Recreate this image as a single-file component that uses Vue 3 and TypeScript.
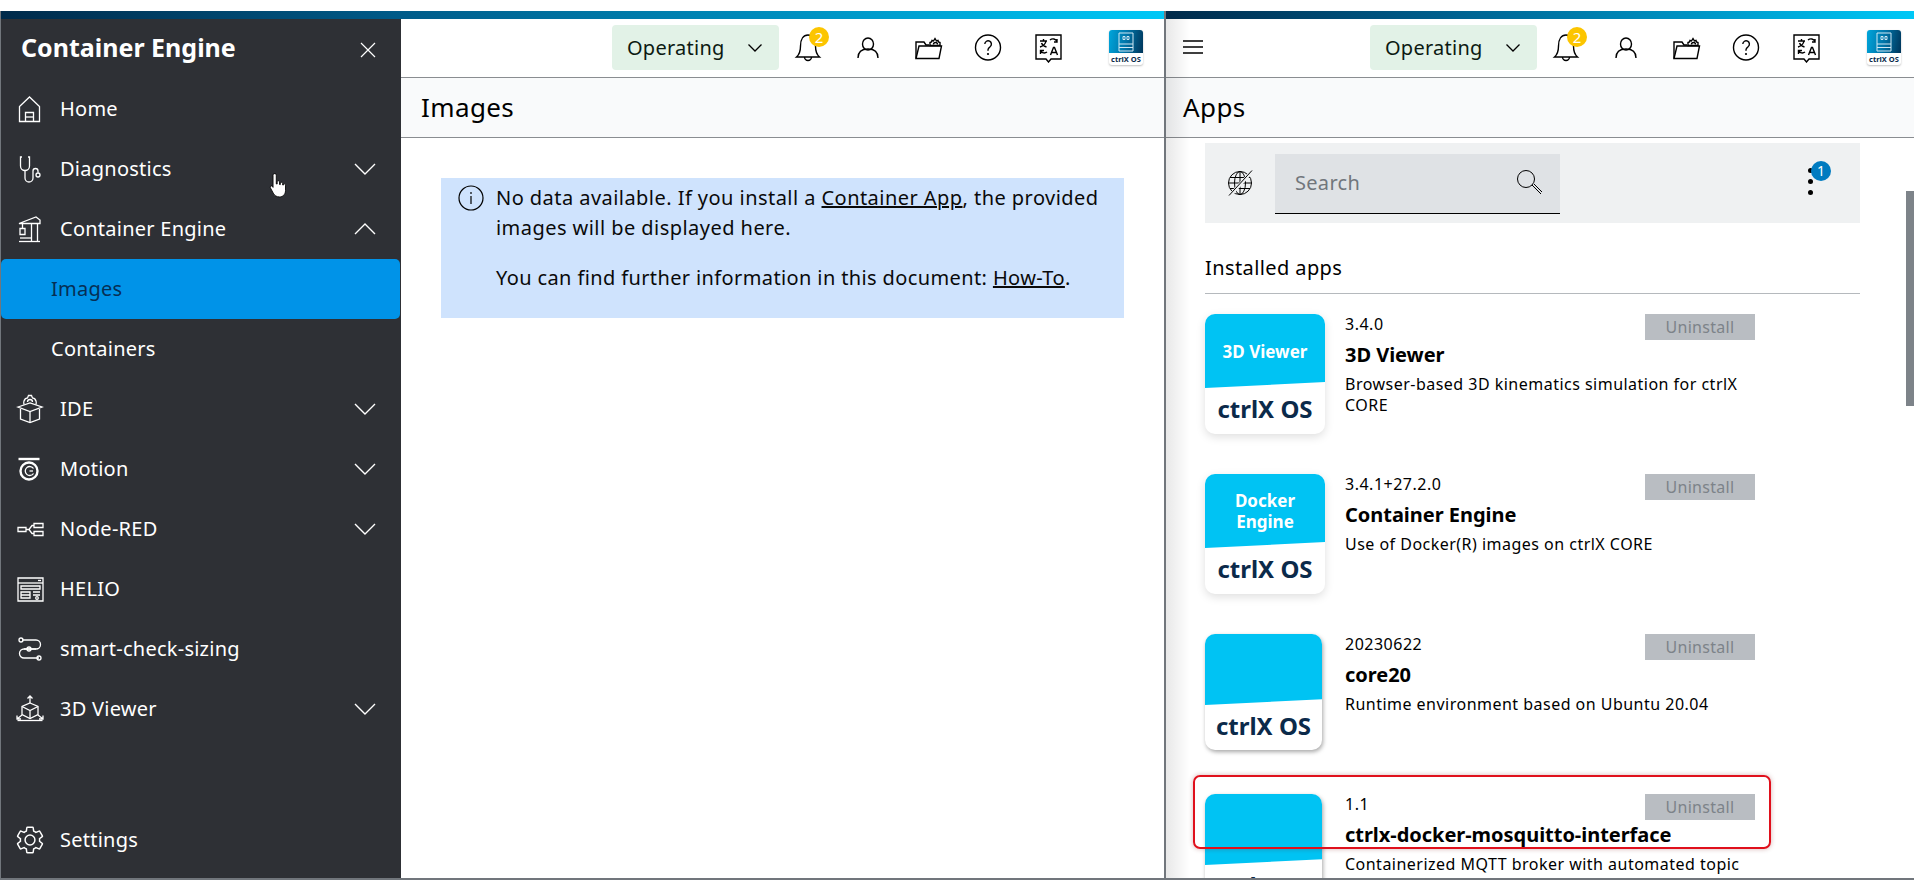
<script setup lang="ts">
interface NavItem {
  label: string
  box: string
  d: string[]
  dots?: number[][]
  chevron?: 'up' | 'down'
  sub?: boolean
  active?: boolean
}

const nav: NavItem[] = [
  { label: 'Home', box: '0 0 32 32', d: ['M5.500 28.500V13.500L15.500 4l10 9.500v15z', 'M11.500 28.500v-9h8v9', 'M11.500 24h8'] },
  { label: 'Diagnostics', box: '0 0 32 32', chevron: 'down', d: ['M8 4H6.500v9a4.500 4.500 0 0 0 9 0V4H14', 'M11 17.500V25a4 4 0 0 0 8 0v-7a2.500 2.500 0 0 1 5 0v1.500'], dots: [[24, 22, 2]] },
  { label: 'Container Engine', box: '0 0 32 32', chevron: 'up', d: ['M5 28.500h21', 'M5 10.500L22 4l4 3v3.500H5z', 'M17.500 10.500v18M23.500 10.500v18', 'M6 15.500h5v6H6z', 'M8.500 10.500v5', 'M6 25h11.500'] },
  { label: 'Images', box: '0 0 32 32', sub: true, active: true, d: [] },
  { label: 'Containers', box: '0 0 32 32', sub: true, d: [] },
  { label: 'IDE', box: '0 0 32 32', chevron: 'down', d: ['M4 14l12-4 12 4-12 4.500z', 'M6.500 16v10l9.500 3.500 9.500-3.500V16', 'M16 18.500v11', 'M10 11.500a6.500 6.500 0 0 1 1.500-6l2-.5 1-2.500h3l1 2.500 2 .5a6.500 6.500 0 0 1 1.500 6', 'M13.500 9a2.500 2.500 0 0 1 5 0'] },
  { label: 'Motion', box: '0 0 32 32', chevron: 'down', d: ['M19.500 15.500a4.500 4.500 0 1 0 0 5', 'M15.500 18h3.500'], dots: [] },
  { label: 'Node-RED', box: '0 0 32 32', chevron: 'down', d: ['M4 14.500h8v4H4z', 'M12 16.500h3l3-4h2M15 16.500l3 4h2', 'M20 10.500h9v4h-9zM20 18.500h9v4h-9z'] },
  { label: 'HELIO', box: '0 0 32 32', d: ['M4 5h25v23H4z', 'M4 10h25', 'M7 13h19v3H7z', 'M7 19h9v6H7zM7 22h9', 'M19 19h7M19 22h7', 'M24 7.500h3'], dots: [[23, 25, 1.300]] },
  { label: 'smart-check-sizing', box: '0 0 32 32', d: ['M8 7h14a4 4 0 0 1 0 9H10a4 4 0 0 0 0 9h15', 'M10 16h12'], dots: [[7, 7, 2], [25, 25, 2], [15, 16, 2]] },
  { label: '3D Viewer', box: '0 0 32 32', chevron: 'down', d: ['M16 10l8 3.500v8l-8 4-8-4v-8z', 'M8 13.500l8 4 8-4M16 17.500v8', 'M16 10V3M13.500 5.500L16 3l2.500 2.500', 'M8 22l-5 4M3 22.500V26h4', 'M24 22l5 4M29 22.500V26h-4', 'M3.500 27.500h25'] }
]

const cog = 'M19.140 12.940c.04-.3.06-.61.06-.94 0-.32-.02-.64-.07-.94l2.030-1.580c.18-.14.23-.41.12-.61l-1.920-3.320c-.12-.22-.37-.29-.59-.22l-2.390.96c-.5-.38-1.030-.7-1.620-.94l-.36-2.540c-.04-.24-.24-.41-.48-.41h-3.840c-.24 0-.43.17-.47.41l-.36 2.540c-.59.24-1.130.57-1.620.94l-2.390-.96c-.22-.08-.47 0-.59.22L2.740 8.870c-.12.21-.08.47.12.61l2.030 1.580c-.05.3-.09.63-.09.94s.02.64.07.94l-2.030 1.580c-.18.14-.23.41-.12.61l1.920 3.320c.12.22.37.29.59.22l2.390-.96c.5.38 1.030.7 1.620.94l.36 2.540c.05.24.24.41.48.41h3.840c.24 0 .44-.17.47-.41l.36-2.540c.59-.24 1.130-.56 1.620-.94l2.390.96c.22.08.47 0 .59-.22l1.920-3.320c.12-.22.07-.47-.12-.61l-2.010-1.580z'

interface Tool { name: string; d: string[]; dots?: number[][] }
const tools: Tool[] = [
  { name: 'bell', d: ['M4.500 26c3-2.500 4-5 4-11 0-7 3-11 7.500-11s7.500 4 7.500 11c0 6 1 8.500 4 11z', 'M12.500 26a3.500 3.500 0 0 0 7 0'] },
  { name: 'user', d: ['M10.500 13a5.500 6 0 1 0 11 0a5.500 6 0 1 0-11 0', 'M6 27c0-6 4-9 10-9s10 3 10 9'] },
  { name: 'folder', d: ['M4 27.500V11h8l2 3h3', 'M4 27.500l3-12.500h22.500L27 27.500z', 'M18 11.500l1.500-.5.500-1.500 1.500.5 1.500-2.500 1.500 2.500 1.500-.5.5 1.500 1.500.5v3h-10z', 'M21.500 13.500a2 2 0 0 1 4 0'] },
  { name: 'help', d: ['M3.500 16.500a12.500 12.500 0 1 0 25 0a12.500 12.500 0 1 0-25 0', 'M12.800 13a3.300 3.300 0 1 1 5.200 2.800c-1.200.8-2 1.500-2 3v1'], dots: [[16, 23, 1.100]] },
  { name: 'translate', d: ['M4 4h25v24H19l-2.500 3-2.500-3H4z', 'M8 10h7M11.500 8v2M14 10c-.5 3-2.500 5-6 6M9.500 12c.8 2 2.500 3.300 5 4', 'M18 9a4.500 4.500 0 0 1 7 1.500M25 8v3h-3', 'M15 21a4.500 4.500 0 0 1-6.500-1M8.500 23v-3.500H12', 'M18.500 24l3-7.500h1l3 7.500M19.800 21.500h4.500'] }
]

const apps = [
  { version: '3.4.0', name: '3D Viewer', desc: 'Browser-based 3D kinematics simulation for ctrlX CORE', lines: ['3D Viewer'], wide: true },
  { version: '3.4.1+27.2.0', name: 'Container Engine', desc: 'Use of Docker(R) images on ctrlX CORE', lines: ['Docker', 'Engine'], wide: true },
  { version: '20230622', name: 'core20', desc: 'Runtime environment based on Ubuntu 20.04', lines: [], wide: false },
  { version: '1.1', name: 'ctrlx-docker-mosquitto-interface', desc: 'Containerized MQTT broker with automated topic', lines: [], wide: false }
]
</script>

<template>
  <div class="screen">
    <div class="topstrip"></div>
    <div class="panes">
      <section class="pane left">
        <div class="brandbar"></div>
        <div class="left-body">
          <aside class="sidebar">
            <div class="side-title">
              <span>Container Engine</span>
              <svg class="close" viewBox="0 0 16 16"><path d="M1 1l14 14M15 1L1 15" /></svg>
            </div>
            <nav class="nav">
              <div v-for="item in nav" :key="item.label" class="nav-row" :class="{ sub: item.sub, active: item.active }">
                <svg v-if="!item.sub" class="nav-icon" :viewBox="item.box">
                  <path v-for="p in item.d" :key="p" :d="p" />
                  <circle v-for="c in item.dots" :key="c[0]" :cx="c[0]" :cy="c[1]" :r="c[2]" />
                  <template v-if="item.label === 'Motion'">
                    <path class="thick" d="M4.500 6h21" />
                    <circle class="thick" cx="15" cy="18" r="8.500" />
                  </template>
                </svg>
                <span class="nav-label">{{ item.label }}</span>
                <svg v-if="item.chevron" class="chev" :class="{ up: item.chevron === 'up' }" viewBox="0 0 22 12"><path d="M1 1l10 10L21 1" /></svg>
              </div>
            </nav>
            <div class="nav-row settings">
              <svg class="nav-icon" viewBox="0 0 24 24"><path :d="cog" stroke-width="1.100" /><circle cx="12" cy="12" r="3.700" stroke-width="1.100" /></svg>
              <span class="nav-label">Settings</span>
            </div>
          </aside>
          <main class="main">
            <header class="head">
              <div class="chip"><span>Operating</span><svg viewBox="0 0 16 10"><path d="M1.500 1.500L8 8l6.500-6.500" /></svg></div>
              <div class="tools">
                <div v-for="t in tools" :key="t.name" class="tool">
                  <svg viewBox="0 0 32 32"><path v-for="p in t.d" :key="p" :d="p" /><circle v-for="c in t.dots" :key="c[0]" class="fill" :cx="c[0]" :cy="c[1]" :r="c[2]" /></svg>
                  <b v-if="t.name === 'bell'" class="bell-badge">2</b>
                </div>
              </div>
              <div class="logo"><div class="logo-top"><svg viewBox="0 0 20 20"><path d="M3 1h14v18H3zM3 12h14M3 15.500h14M7 4.500h2v3H7zM11 4.500h2v3h-2z" /></svg></div><span>ctrlX OS</span></div>
            </header>
            <div class="titlebar">Images</div>
            <div class="notice">
              <svg class="info" viewBox="0 0 26 26"><circle cx="13" cy="13" r="12" /><path d="M13 11v8M13 7v2" /></svg>
              <div class="notice-text">
                <p>No data available. If you install a <a>Container App</a>, the provided images will be displayed here.</p>
                <p class="doc">You can find further information in this document: <a>How-To</a>.</p>
              </div>
            </div>
          </main>
        </div>
      </section>

      <section class="pane right">
        <div class="brandbar"></div>
        <header class="head head-right">
          <svg class="burger" viewBox="0 0 20 14"><path d="M0 1h20M0 7h20M0 13h20" /></svg>
          <div class="chip"><span>Operating</span><svg viewBox="0 0 16 10"><path d="M1.500 1.500L8 8l6.500-6.500" /></svg></div>
          <div class="tools">
            <div v-for="t in tools" :key="t.name" class="tool">
              <svg viewBox="0 0 32 32"><path v-for="p in t.d" :key="p" :d="p" /><circle v-for="c in t.dots" :key="c[0]" class="fill" :cx="c[0]" :cy="c[1]" :r="c[2]" /></svg>
              <b v-if="t.name === 'bell'" class="bell-badge">2</b>
            </div>
          </div>
          <div class="logo"><div class="logo-top"><svg viewBox="0 0 20 20"><path d="M3 1h14v18H3zM3 12h14M3 15.500h14M7 4.500h2v3H7zM11 4.500h2v3h-2z" /></svg></div><span>ctrlX OS</span></div>
        </header>
        <div class="titlebar titlebar-right">Apps</div>
        <div class="content">
          <div class="toolbar">
            <svg class="globe" viewBox="0 0 26 26"><circle cx="13" cy="13" r="11.500" /><ellipse cx="13" cy="13" rx="5.500" ry="11.500" /><path d="M13 1.500v23M1.500 13h23M3 7.500h20M3 18.500h20" /><path class="slash-gap" d="M25 1.500L3 25.500" /><path d="M25 .5L2 25.500" /></svg>
            <div class="search">
              <span>Search</span>
              <svg viewBox="0 0 28 26"><circle cx="10" cy="10" r="8.500" /><path d="M16 16l9 9M18 15l8 8" /></svg>
            </div>
            <div class="kebab"><i></i><i></i><i></i><b>1</b></div>
          </div>
          <h2 class="section">Installed apps</h2>
          <div v-for="(app, i) in apps" :key="app.name" class="app">
            <div class="tile" :class="{ narrow: !app.wide }">
              <div class="tile-top"><span v-for="l in app.lines" :key="l">{{ l }}</span></div>
              <div class="tile-bottom">ctrlX OS</div>
            </div>
            <div class="app-text">
              <div class="ver">{{ app.version }}</div>
              <div class="app-name">{{ app.name }}</div>
              <div class="desc">{{ app.desc }}</div>
            </div>
            <button class="uninstall" :data-row="i">Uninstall</button>
          </div>
        </div>
        <div class="side-shade"></div>
        <div class="scrollbar"></div>
      </section>
    </div>
    <div class="bottomline"></div>
    <div class="annotation"></div>
    <svg class="cursor" viewBox="0 0 18 24">
      <path d="M5 1.500c1 0 1.500.7 1.500 1.500v8l.8.1V8.500c1.200-.8 2-.3 2.200.5v2.500l.7.1V9.800c1.200-.6 2-.2 2.200.7V12l.6.1v-1c1-.4 2 0 2 1.100v5c0 3.500-2.500 5.800-5.500 5.800-2.800 0-4.500-1.200-5.800-3.500L1 14.500c-.5-1 .8-2.300 2-1.300l.5 1V3c0-.8.5-1.500 1.500-1.500z" />
    </svg>
  </div>
</template>

<style>
html, body { margin: 0; background: #fff; overflow: hidden; }
</style>

<style scoped>
.screen { position: relative; width: 1914px; height: 880px; overflow: hidden; background: #fff; font-family: "Noto Sans", sans-serif; color: #000; display: flex; flex-direction: column; }
.topstrip { height: 11px; flex: none; }
.panes { flex: 1; display: flex; min-height: 0; }
.bottomline { height: 2px; flex: none; background: #71767c; }
.pane { display: flex; flex-direction: column; min-width: 0; position: relative; }
.left { width: 1166px; flex: none; box-sizing: border-box; border-left: 1px solid #71767c; border-right: 2px solid #71767c; }
.right { flex: 1; overflow: hidden; }
.brandbar { height: 8px; flex: none; background: linear-gradient(90deg, #002a4a 0%, #005c8a 35%, #0090c0 68%, #00c8f7 100%); }
.left-body { flex: 1; display: flex; min-height: 0; }

.sidebar { width: 400px; flex: none; background: #2e3035; color: #fff; display: flex; flex-direction: column; }
.side-title { height: 60px; box-sizing: border-box; display: flex; align-items: center; justify-content: space-between; padding: 0 25px 4px 20px; font-size: 25px; font-weight: 700; }
.close { width: 16px; height: 16px; margin-top: 6px; fill: none; stroke: #fff; stroke-width: 1.200; }
.nav { flex: 1; }
.nav-row { height: 60px; box-sizing: border-box; display: flex; align-items: center; padding-left: 13px; padding-bottom: 2px; font-size: 20px; letter-spacing: .25px; }
.nav-row.sub { padding-left: 50px; }
.nav-row.active { background: #0093e8; color: #062f55; border-radius: 5px; margin-right: 1px; }
.nav-icon { width: 32px; height: 32px; flex: none; margin-right: 14px; margin-top: 2px; fill: none; stroke: #fff; stroke-width: 1.300; }
.nav-icon circle { fill: none; }
.nav-icon .thick { stroke-width: 2.400; }
.nav-label { flex: 1; }
.chev { width: 22px; height: 12px; margin-right: 25px; margin-top: 2px; fill: none; stroke: #fff; stroke-width: 1.400; }
.chev.up { transform: scaleY(-1); }
.settings { margin-bottom: 8px; }

.main { flex: 1; min-width: 0; display: flex; flex-direction: column; }
.head { height: 59px; flex: none; box-sizing: border-box; border-bottom: 1px solid #8a8d91; display: flex; align-items: flex-start; justify-content: flex-end; padding-top: 6px; padding-right: 21px; position: relative; }
.chip { width: 167px; height: 45px; box-sizing: border-box; background: #e2f2e7; border-radius: 4px; display: flex; align-items: center; justify-content: space-between; padding: 0 16px 0 15px; font-size: 20px; letter-spacing: .25px; color: #0c1a12; }
.chip svg { width: 16px; height: 10px; fill: none; stroke: #000; stroke-width: 1.300; }
.tools { display: flex; margin-left: -1px; margin-right: 31px; }
.tool { width: 60px; height: 32px; position: relative; margin-top: 6px; display: flex; justify-content: center; }
.tool svg { width: 32px; height: 32px; fill: none; stroke: #000; stroke-width: 1.400; }
.tool svg .fill { fill: #000; stroke: none; }
.bell-badge { position: absolute; left: 31px; top: -4px; width: 20px; height: 20px; border-radius: 50%; background: #fcc500; color: #fff; font-size: 15px; font-weight: 400; line-height: 20px; text-align: center; }
.logo { width: 34px; height: 35px; margin-top: 5px; border-radius: 3px; overflow: hidden; background: #fff; box-shadow: 0 1px 2px rgba(0,0,0,.25); display: flex; flex-direction: column; align-items: center; font-size: 7.500px; font-weight: 700; color: #0b2a4a; line-height: 12px; white-space: nowrap; }
.logo-top { width: 100%; height: 23px; flex: none; background: linear-gradient(100deg, #00a6dc 0%, #0074a8 50%, #00355a 100%); display: flex; justify-content: center; }
.logo-top svg { width: 20px; height: 20px; margin-top: 2px; fill: none; stroke: #cfe8f4; stroke-width: 1; }

.titlebar { height: 60px; flex: none; box-sizing: border-box; background: #f9fafb; border-bottom: 1px solid #8a8d91; padding: 0 0 2px 20px; display: flex; align-items: center; font-size: 26px; letter-spacing: .4px; }
.notice { margin: 40px 40px 0 40px; height: 140px; box-sizing: border-box; background: #cfe3fd; display: flex; padding: 5px 0 0 17px; font-size: 20px; letter-spacing: .45px; color: #0a0a0a; line-height: 30px; }
.info { width: 26px; height: 26px; flex: none; margin: 2px 12px 0 0; fill: none; stroke: #000; stroke-width: 1.200; }
.notice-text p { margin: 0 0 20px; }
.notice-text .doc { letter-spacing: .38px; }
.notice-text a { text-decoration: underline; }

.head-right { padding-right: 13px; }
.burger { position: absolute; left: 17px; top: 21px; width: 20px; height: 14px; fill: none; stroke: #000; stroke-width: 1.500; }
.titlebar-right { padding-left: 17px; }
.content { flex: 1; min-height: 0; overflow: hidden; padding: 5px 54px 0 39px; }
.toolbar { height: 80px; background: #eff1f2; display: flex; align-items: center; position: relative; padding-left: 22px; }
.globe { width: 26px; height: 26px; margin-right: 22px; fill: none; stroke: #000; stroke-width: 1; }
.globe .slash-gap { stroke: #eff1f2; stroke-width: 3.500; }
.search { width: 285px; height: 60px; box-sizing: border-box; background: #dfe2e5; border-bottom: 1.500px solid #000; display: flex; align-items: center; justify-content: space-between; padding: 0 16px 2px 20px; font-size: 20px; letter-spacing: .3px; color: #71767c; margin-top: 1px; }
.search svg { width: 28px; height: 26px; fill: none; stroke: #000; stroke-width: 1; }
.kebab { position: absolute; left: 603px; top: 25px; display: flex; flex-direction: column; gap: 6px; }
.kebab i { width: 5px; height: 5px; border-radius: 50%; background: #000; }
.kebab b { position: absolute; left: 3px; top: -7px; width: 20px; height: 20px; border-radius: 50%; background: #007bc0; color: #fff; font-size: 14px; font-weight: 400; line-height: 20px; text-align: center; }
.section { margin: 0; height: 71px; box-sizing: border-box; border-bottom: 1px solid #b5b9bd; display: flex; align-items: center; padding-top: 19px; font-size: 20px; font-weight: 400; letter-spacing: .4px; }
.app { height: 160px; position: relative; display: flex; padding-top: 20px; box-sizing: border-box; }
.tile { width: 120px; height: 120px; flex: none; position: relative; margin-right: 20px; border-radius: 10px; background: #fff; box-shadow: 0 3px 10px rgba(0,0,0,.13); overflow: hidden; color: #fff; }
.tile.narrow { width: 117px; height: 116px; box-shadow: 1px 2px 4px rgba(0,0,0,.35); margin-right: 23px; }
.tile-top { height: 74px; background: #00c3f3; clip-path: polygon(0 0, 100% 0, 100% 92%, 0 100%); display: flex; flex-direction: column; align-items: center; justify-content: center; font-size: 17px; font-weight: 700; line-height: 21px; }
.narrow .tile-top { height: 71px; }
.tile-bottom { text-align: center; color: #0b2a4a; font-size: 24px; font-weight: 700; line-height: 32px; margin-top: 5px; }
.app-text { width: 405px; }
.ver { font-size: 16px; line-height: 20px; letter-spacing: .5px; }
.app-name { font-size: 20px; font-weight: 700; line-height: 26px; margin-top: 8px; letter-spacing: -.03px; }
.desc { font-size: 16px; line-height: 21px; letter-spacing: .48px; margin-top: 6px; }
.uninstall { position: absolute; left: 440px; top: 20px; width: 110px; height: 26px; padding: 0; border: 0; background: #b9bdc2; color: #7d8389; font: inherit; font-size: 16px; letter-spacing: .3px; }
.side-shade { position: absolute; left: 0; top: 8px; bottom: 0; width: 24px; background: linear-gradient(90deg, rgba(0,0,0,.09), rgba(0,0,0,0)); pointer-events: none; }
.scrollbar { position: absolute; right: 0; top: 180px; width: 8px; height: 215px; background: #7d8389; }
.annotation { position: absolute; left: 1193px; top: 775px; width: 578px; height: 74px; box-sizing: border-box; border: 2px solid #e0101c; border-radius: 7px; box-shadow: 0 0 5px rgba(120,0,0,.3); pointer-events: none; }
.cursor { position: absolute; left: 269px; top: 172px; width: 20px; height: 26px; fill: #fff; stroke: #000; stroke-width: .8; }
</style>
